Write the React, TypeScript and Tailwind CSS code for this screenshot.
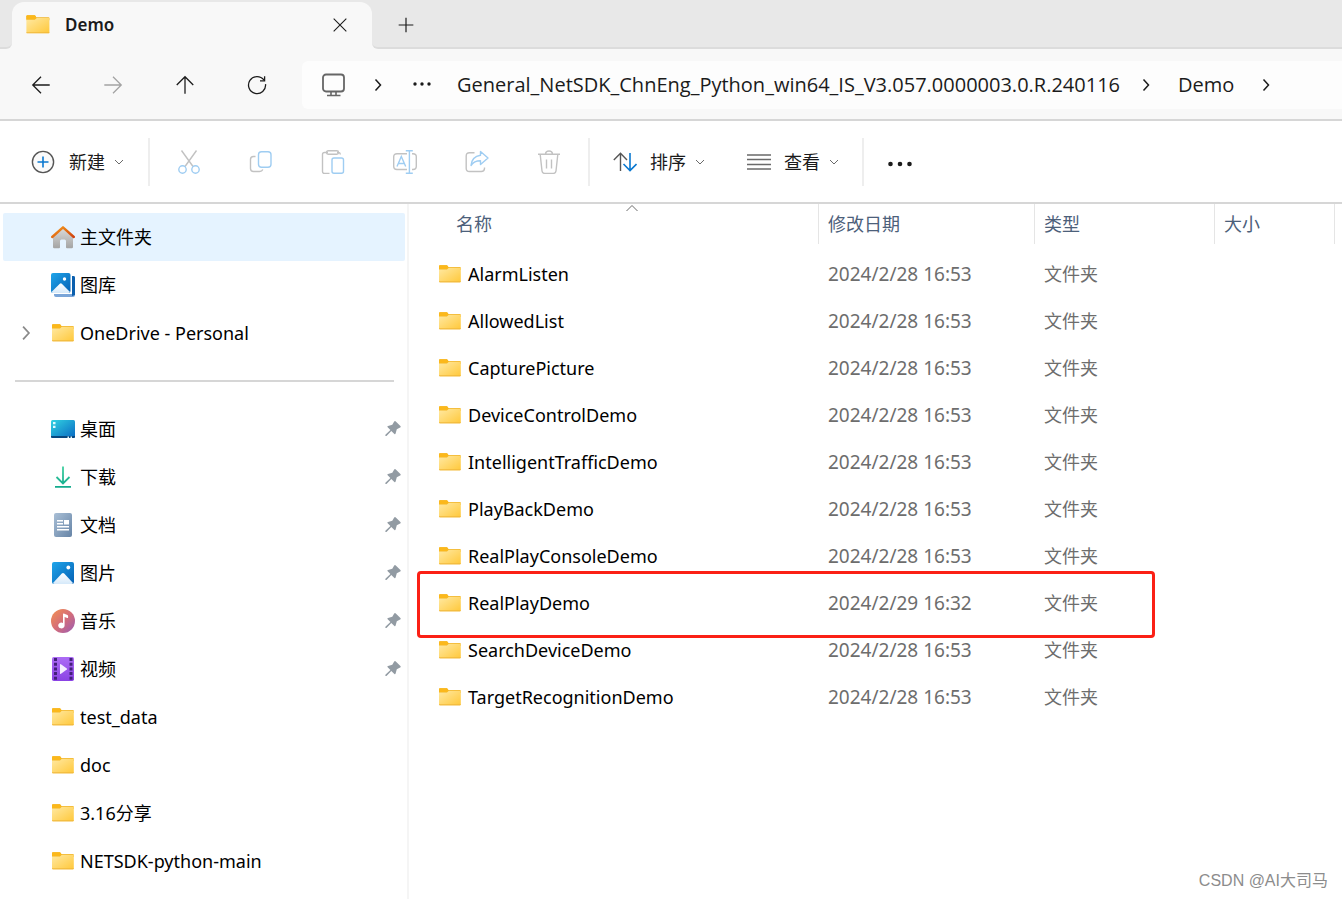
import type { ReactNode } from "react";

const files = [
  { name: "AlarmListen", date: "2024/2/28 16:53" },
  { name: "AllowedList", date: "2024/2/28 16:53" },
  { name: "CapturePicture", date: "2024/2/28 16:53" },
  { name: "DeviceControlDemo", date: "2024/2/28 16:53" },
  { name: "IntelligentTrafficDemo", date: "2024/2/28 16:53" },
  { name: "PlayBackDemo", date: "2024/2/28 16:53" },
  { name: "RealPlayConsoleDemo", date: "2024/2/28 16:53" },
  { name: "RealPlayDemo", date: "2024/2/29 16:32", marked: true },
  { name: "SearchDeviceDemo", date: "2024/2/28 16:53" },
  { name: "TargetRecognitionDemo", date: "2024/2/28 16:53" },
];

function Gradients() {
  return (
    <svg width="0" height="0" className="absolute" aria-hidden="true">
      <defs>
        <linearGradient id="folder" x1="0" y1="0" x2="1" y2="1">
          <stop offset="0" stopColor="#ffe9a3" />
          <stop offset="1" stopColor="#ffc83a" />
        </linearGradient>
        <linearGradient id="roof" x1="0" y1="0" x2="1" y2="1">
          <stop offset="0" stopColor="#f59b1c" />
          <stop offset="1" stopColor="#d0410f" />
        </linearGradient>
        <linearGradient id="wall" x1="0" y1="0" x2="0" y2="1">
          <stop offset="0" stopColor="#dedede" />
          <stop offset="1" stopColor="#a4a4a4" />
        </linearGradient>
        <linearGradient id="photo" x1="0" y1="0" x2="1" y2="1">
          <stop offset="0" stopColor="#1fa5ea" />
          <stop offset="1" stopColor="#0560b4" />
        </linearGradient>
        <linearGradient id="snow" x1="0" y1="0" x2="0" y2="1">
          <stop offset="0" stopColor="#ffffff" />
          <stop offset="1" stopColor="#d5e9fa" />
        </linearGradient>
        <linearGradient id="desktop" x1="0" y1="0" x2="1" y2="1">
          <stop offset="0" stopColor="#32d3e2" />
          <stop offset="1" stopColor="#0868c2" />
        </linearGradient>
        <linearGradient id="arrow" gradientUnits="userSpaceOnUse" x1="0" y1="1" x2="0" y2="23">
          <stop offset="0" stopColor="#42d0a0" />
          <stop offset="1" stopColor="#10a98c" />
        </linearGradient>
        <linearGradient id="paper" x1="0" y1="0" x2="1" y2="1">
          <stop offset="0" stopColor="#a9bfd6" />
          <stop offset="1" stopColor="#6684a6" />
        </linearGradient>
        <linearGradient id="disc" x1="0" y1="0" x2="1" y2="1">
          <stop offset="0" stopColor="#f49150" />
          <stop offset="0.5" stopColor="#d56e78" />
          <stop offset="1" stopColor="#9a5bb5" />
        </linearGradient>
        <linearGradient id="film" x1="0" y1="0" x2="0" y2="1">
          <stop offset="0" stopColor="#ac6cf5" />
          <stop offset="1" stopColor="#8a42e4" />
        </linearGradient>
      </defs>
    </svg>
  );
}

function Folder({ className = "w-[22px] h-[18px]" }: { className?: string }) {
  return (
    <svg viewBox="0 0 22 18" className={`shrink-0 ${className}`}>
      <path d="M0 1.2Q0 .2 1 .2h7l1.4 1.9H21q.8 0 .8.8V5H0z" fill="#f0b429" />
      <path d="M0 1.2Q0 .2 1 .2h6.6q.6 0 1 .6l.6 1v2.4H0z" fill="#fbb81b" />
      <path d="M0 4.4h8l1.8-1.6h12V16.4q0 .8-.8.8H.8q-.8 0-.8-.8z" fill="url(#folder)" />
      <path d="M0 16h21.8v.6q0 .8-.8.8H.8q-.8 0-.8-.8z" fill="#efb63b" opacity=".7" />
    </svg>
  );
}

function HomeIcon() {
  return (
    <svg viewBox="0 0 24 24" className="w-6 h-6">
      <path d="M2 10.5 12 2l10 8.500V22q0 1.200-1.200 1.200H16q-1 0-1-1V16q0-1.500-1.500-1.500h-3Q9 14.500 9 16v6.200q0 1-1 1H3.200Q2 23.200 2 22z" fill="url(#wall)" />
      <path d="M1.200 12 12 2.300 22.800 12" fill="none" stroke="url(#roof)" strokeWidth="2.400" strokeLinejoin="round" strokeLinecap="round" />
    </svg>
  );
}

function GalleryIcon() {
  return (
    <svg viewBox="0 0 24 24" className="w-6 h-6">
      <path d="M3 21h18V3h1.500Q24 3 24 4.500V22q0 2-2 2H5q-2 0-2-2z" fill="#7aa5d8" />
      <path d="M21 3h1.500Q24 3 24 4.500V22l-3 1z" fill="#0a5fae" />
      <rect width="20.500" height="21" rx="2" fill="#fff" />
      <rect width="19.500" height="20" rx="2" fill="url(#photo)" />
      <path d="m.5 19 8.300-8.300q1-1 2 0L19 19q-.6 1-1.600 1H2Q1 20 .5 19z" fill="url(#snow)" />
      <circle cx="13.500" cy="6" r="1.700" fill="#fff" />
    </svg>
  );
}

function DesktopIcon() {
  return (
    <svg viewBox="0 0 24 24" className="w-6 h-6">
      <rect y="3" width="24" height="18" rx="1.500" fill="url(#desktop)" />
      <path d="M0 19h24v.5q0 1.500-1.500 1.500h-21Q0 21 0 19.500z" fill="#07477f" />
      <path d="M2 5h2.500v2.300H2zM2 8.700h2.500V11H2zM16.500 19.400H18V21h-1.500zM19.500 19.400H21V21h-1.500z" fill="#dffaff" />
    </svg>
  );
}

function DownloadIcon() {
  return (
    <svg viewBox="0 0 24 24" className="w-6 h-6" fill="none" stroke="url(#arrow)" strokeWidth="1.800">
      <path d="M12 1.500 12.010 18.500M5.500 12l6.500 6.500 6.500-6.500M4 21.900l16 .01" />
    </svg>
  );
}

function DocumentIcon() {
  return (
    <svg viewBox="0 0 24 24" className="w-6 h-6">
      <rect x="3" width="18" height="24" rx="2" fill="url(#paper)" />
      <path d="M6 7h6v1.500H6zM6 10h6v1.500H6zM13 7h5v4.500h-5zM6 13h12v1.500H6zM6 16h12v1.500H6z" fill="#fff" />
    </svg>
  );
}

function PictureIcon() {
  return (
    <svg viewBox="0 0 24 24" className="w-6 h-6">
      <rect x="1" y="1" width="22" height="22" rx="2" fill="url(#photo)" />
      <path d="m2 22 8.800-9.500q1.200-1.100 2.400 0L22 22q-.5 1-1.500 1h-17Q2.500 23 2 22z" fill="url(#snow)" />
      <circle cx="17.300" cy="6.500" r="1.900" fill="#fff" />
    </svg>
  );
}

function MusicIcon() {
  return (
    <svg viewBox="0 0 24 24" className="w-6 h-6">
      <circle cx="12" cy="12" r="12" fill="url(#disc)" />
      <path d="M12 5.200q0-.8.800-.6l3.600 1.300q.7.300.7 1v1.600q0 .8-.8.500L13.600 8v8.500a3.200 2.900 0 1 1-1.600-2.500z" fill="#fff" />
    </svg>
  );
}

function VideoIcon() {
  return (
    <svg viewBox="0 0 24 24" className="w-6 h-6">
      <rect x="1" width="22" height="24" rx="1.800" fill="url(#film)" />
      <path
        d="M4.500 1v22M20 1v22"
        stroke="#43207a"
        strokeWidth="3"
        strokeDasharray="3 1.700"
      />
      <path d="M9 7.400v9.200q0 .7.600.3l6.200-4.400q.6-.5 0-1L9.600 7.100Q9 6.700 9 7.400z" fill="#f4ecff" />
    </svg>
  );
}

function PinIcon() {
  return (
    <svg viewBox="0 0 16 16" className="w-4 h-4 shrink-0" fill="#929ba3">
      <path d="M9.200.5q.8-.8 1.600 0l4.600 4.600q.8 1-.3 1.500l-3.300 1.600-1.200 4.400q-.4 1-1.200.3L6.300 9.900 1.500 15H.4v-1.200l5-4.800-2.700-2.800q-.8-.8.300-1.200l4.300-1.300z" />
    </svg>
  );
}

function Chevron({ className }: { className: string }) {
  return (
    <svg viewBox="0 0 12 12" className={`shrink-0 ${className}`} fill="none" stroke="currentColor" strokeWidth="1.500">
      <path d="m3.500.5 5 5.500-5 5.500" />
    </svg>
  );
}

function ChevronDown() {
  return (
    <svg viewBox="0 0 10 10" className="w-[10px] h-[10px] shrink-0" fill="none" stroke="#6a6a6a">
      <path d="m1 3 4 4 4-4" />
    </svg>
  );
}

function Line({ children, className = "w-6 h-6" }: { children: ReactNode; className?: string }) {
  return (
    <svg viewBox="0 0 24 24" className={`shrink-0 ${className}`} fill="none" stroke="currentColor" strokeWidth="1.400">
      {children}
    </svg>
  );
}

const quickAccess = [
  { label: "桌面", icon: <DesktopIcon />, pinned: true },
  { label: "下载", icon: <DownloadIcon />, pinned: true },
  { label: "文档", icon: <DocumentIcon />, pinned: true },
  { label: "图片", icon: <PictureIcon />, pinned: true },
  { label: "音乐", icon: <MusicIcon />, pinned: true },
  { label: "视频", icon: <VideoIcon />, pinned: true },
  { label: "test_data", icon: <Folder /> },
  { label: "doc", icon: <Folder /> },
  { label: "3.16分享", icon: <Folder /> },
  { label: "NETSDK-python-main", icon: <Folder /> },
];

const navButtons = [
  { label: "Back", tone: "text-[#1b1b1b]", path: "M21.500 12H3M12 3l-9 9 9 9" },
  { label: "Forward", tone: "text-[#a3a3a3]", path: "M2.500 12H21M12 3l9 9-9 9" },
  { label: "Up", tone: "text-[#1b1b1b]", path: "M12 21.500V3M3 12l9-9 9 9" },
  { label: "Refresh", tone: "text-[#1b1b1b]", path: "M19.500 6.500A9.300 9.300 0 1 0 21.300 11M20.300 2.500v5h-5" },
];

const actions = [
  {
    label: "Cut",
    icon: (
      <>
        <path d="m4.500.5 11.500 16M19.500.5 8 16.500" stroke="#c2c2c2" />
        <circle cx="5.500" cy="19.500" r="3.700" stroke="#9fcdf2" />
        <circle cx="18.500" cy="19.500" r="3.700" stroke="#9fcdf2" />
      </>
    ),
  },
  {
    label: "Copy",
    icon: (
      <>
        <path d="M6.500 6.500H4.500q-3 0-3 3v9q0 3 3 3h6q2.500 0 3.300-2" stroke="#c2c2c2" />
        <rect x="9.500" y="1.700" width="12.500" height="15.500" rx="3" stroke="#9fcdf2" />
      </>
    ),
  },
  {
    label: "Paste",
    icon: (
      <>
        <path d="M7 2.500H3.500q-2 0-2 2v17q0 2 2 2h5M16 2.500h1.500q1.700 0 1.900 2" stroke="#c2c2c2" />
        <rect x="5.500" y=".8" width="12" height="3.400" rx="1.700" stroke="#c2c2c2" />
        <rect x="11" y="8" width="11.500" height="15.300" rx="2" stroke="#9fcdf2" />
      </>
    ),
  },
  {
    label: "Rename",
    icon: (
      <>
        <path d="M14 3.700H4q-3.300 0-3.300 3v9.600q0 3.200 3.300 3.200h10M19 3.700h1q3.300 0 3.300 3v9.600q0 3.200-3.300 3.200h-1" stroke="#c2c2c2" />
        <path d="m4 16.500 4.300-10 4.400 10M5.500 13.500h5.800M12.800.8h7M16.400.8v22.400M12.800 23.200h7" stroke="#9fcdf2" />
      </>
    ),
  },
  {
    label: "Share",
    icon: (
      <>
        <path d="M9.500 2.700H4.500q-3.300 0-3.300 3.300v12.500q0 3 3.300 3h11.700q3.300 0 3.300-3v-1" stroke="#c2c2c2" />
        <path d="m15.500 1.500 7.500 6.500-7.500 6.500v-3.700q-6.500 0-9.500 4.700.8-9 9.500-10.300z" stroke="#9fcdf2" strokeLinejoin="round" />
      </>
    ),
  },
  {
    label: "Delete",
    icon: (
      <path d="M1 4.200h22M8.500 4q.2-3 3.500-3t3.500 3M3.200 4.500 5 21q.3 2.400 2.600 2.400h8.800q2.300 0 2.600-2.400l1.800-16.500M9.500 9.500v9M14.500 9.500v9" stroke="#c2c2c2" />
    ),
  },
];

function SideItem({ icon, label, pinned, active, expandable }: {
  icon: ReactNode;
  label: string;
  pinned?: boolean;
  active?: boolean;
  expandable?: boolean;
}) {
  return (
    <li>
      <a
        href="#"
        className={`flex h-12 items-center rounded-xs pr-1 ${active ? "bg-[#e5f3ff]" : ""}`}
      >
        <span className="w-12 pl-4 text-[#8a8a8a]">
          {expandable && <Chevron className="w-[14px] h-[14px]" />}
        </span>
        <span className="flex w-6 justify-center">{icon}</span>
        <span className="grow pl-[5px] text-lg text-black">{label}</span>
        {pinned && <PinIcon />}
      </a>
    </li>
  );
}

function TabStrip() {
  return (
    <header className="flex h-[49px] bg-[#f8f8f8]">
      <div className="w-3 rounded-br-md border-b-2 border-[#dcdcdc] bg-[#e8e8e8]" />
      <div className="flex w-[360px] bg-[#e8e8e8] pt-[2px]">
        <div className="flex grow items-center rounded-t-xl bg-[#f8f8f8] pr-[22px] pb-[2px] pl-[14px]">
          <Folder className="w-6 h-[19px]" />
          <span className="grow pl-[15px] text-[17px] font-semibold text-[#1b1b1b]">Demo</span>
          <button aria-label="Close tab" className="flex w-5 h-5 items-center justify-center text-[#1b1b1b]">
            <Line className="w-4 h-4">
              <path d="m2.500 2.500 19 19M21.500 2.500l-19 19" strokeWidth="1.600" />
            </Line>
          </button>
        </div>
      </div>
      <div className="flex grow items-center rounded-bl-md border-b-2 border-[#dcdcdc] bg-[#e8e8e8] pt-[3px] pl-[26px]">
        <button aria-label="New tab" className="text-[#1b1b1b]">
          <Line className="w-4 h-4">
            <path d="M12 1v22M1 12h22" strokeWidth="1.800" />
          </Line>
        </button>
      </div>
    </header>
  );
}

function AddressBar() {
  return (
    <nav className="flex h-[72px] items-center border-b-2 border-[#d6d6d6] bg-[#f8f8f8] pt-[2px] pl-[17px]">
      <div className="flex gap-6">
        {navButtons.map((b) => (
          <button key={b.label} aria-label={b.label} className={`flex w-12 h-12 items-center justify-center ${b.tone}`}>
            <Line className="w-[22px] h-[22px]">
              <path d={b.path} />
            </Line>
          </button>
        ))}
      </div>
      <div className="ml-[21px] flex h-12 grow items-center rounded-l-md bg-[#fdfdfd] pl-5 font-['Open_Sans','Noto_Sans_CJK_SC',sans-serif] text-xl whitespace-nowrap text-[#1b1b1b]">
        <Line className="w-6 h-6 text-[#666666]">
          <rect x="1" y="1.500" width="21" height="17" rx="3" strokeWidth="1.800" />
          <path d="M9 18.500V22M14 18.500V22M5 22.500h13.500" strokeWidth="1.600" />
        </Line>
        <Chevron className="ml-[26px] w-3 h-3" />
        <button aria-label="More folders" className="ml-[29px]">
          <svg viewBox="0 0 18 18" className="w-[18px] h-[18px]" fill="#1b1b1b">
            <circle cx="2" cy="8" r="1.700" />
            <circle cx="9" cy="8" r="1.700" />
            <circle cx="16" cy="8" r="1.700" />
          </svg>
        </button>
        <a href="#" className="ml-[26px]">General_NetSDK_ChnEng_Python_win64_IS_V3.057.0000003.0.R.240116</a>
        <Chevron className="ml-5 w-3 h-3" />
        <a href="#" className="ml-[26px]">Demo</a>
        <Chevron className="ml-[26px] w-3 h-3" />
      </div>
    </nav>
  );
}

function Divider() {
  return <div className="h-12 w-[2px] shrink-0 bg-[#eeeeee]" />;
}

function Toolbar() {
  return (
    <div className="flex h-[83px] items-center border-b-2 border-[#d6d6d6] bg-white text-lg whitespace-nowrap text-[#1b1b1b]">
      <button className="flex items-center pr-6 pl-[31px]">
        <Line>
          <circle cx="12" cy="12" r="10.600" stroke="#555555" fill="#fafafa" />
          <path d="M12 6.500v11M6.500 12h11" stroke="#0a78d0" strokeWidth="1.600" />
        </Line>
        <span className="pr-[9px] pl-[14px]">新建</span>
        <ChevronDown />
      </button>
      <Divider />
      <div className="flex gap-6 px-[15px]">
        {actions.map((a) => (
          <button key={a.label} aria-label={a.label} disabled className="flex w-12 h-12 items-center justify-center">
            <Line>{a.icon}</Line>
          </button>
        ))}
      </div>
      <Divider />
      <button className="flex items-center pr-[42px] pl-[23px]">
        <Line>
          <path d="M7.500 21V3.500M.8 10l6.700-6.700L14 10" stroke="#555555" />
          <path d="M17 3v17.500M10.500 14l6.500 6.500 6.500-6.500" stroke="#0a78d0" strokeWidth="1.600" />
        </Line>
        <span className="pr-[9px] pl-[13px]">排序</span>
        <ChevronDown />
      </button>
      <button className="flex items-center pr-[23px]">
        <Line className="w-6 h-6 text-[#6a6a6a]">
          <path d="M0 5h24M0 9.500h24M0 14.500h24M0 19h24" />
        </Line>
        <span className="pr-[9px] pl-[13px]">查看</span>
        <ChevronDown />
      </button>
      <Divider />
      <button aria-label="See more" className="pl-6">
        <svg viewBox="0 0 24 24" className="w-6 h-6" fill="#1b1b1b">
          <circle cx="2.500" cy="14" r="2.300" />
          <circle cx="12" cy="14" r="2.300" />
          <circle cx="21.500" cy="14" r="2.300" />
        </svg>
      </button>
    </div>
  );
}

function Sidebar() {
  return (
    <aside className="w-[409px] shrink-0 border-r-2 border-[#f5f5f5] pt-[9px] pr-[2px] pl-[3px]">
      <ul>
        <SideItem icon={<HomeIcon />} label="主文件夹" active />
        <SideItem icon={<GalleryIcon />} label="图库" />
        <SideItem icon={<Folder />} label="OneDrive - Personal" expandable />
      </ul>
      <div className="flex h-12 items-center pr-[11px] pl-3">
        <hr className="grow border-t-2 border-[#d6d6d6]" />
      </div>
      <ul>
        {quickAccess.map((q) => (
          <SideItem key={q.label} {...q} />
        ))}
      </ul>
    </aside>
  );
}

function HeadCell({ children, className = "" }: { children: ReactNode; className?: string }) {
  return (
    <th scope="col" className="h-[46px] p-0 align-top font-normal">
      <div className={`flex h-10 items-center border-r border-[#e5e5e5] text-lg text-[#4c607a] ${className}`}>
        {children}
      </div>
    </th>
  );
}

function FileTable() {
  return (
    <main className="relative min-w-0 grow">
      <table className="w-full table-fixed text-left">
        <colgroup>
          <col className="w-[410px]" />
          <col className="w-[216px]" />
          <col className="w-[180px]" />
          <col className="w-[120px]" />
          <col />
        </colgroup>
        <thead>
          <tr>
            <HeadCell className="relative pl-[47px]">
              名称
              <svg viewBox="0 0 12 8" className="absolute top-0 left-[217px] w-3 h-2" fill="none" stroke="#6a6a6a">
                <path d="m.5 7 5.500-5.500L11.500 7" />
              </svg>
            </HeadCell>
            <HeadCell className="pl-[9px]">修改日期</HeadCell>
            <HeadCell className="pl-[9px]">类型</HeadCell>
            <HeadCell className="pl-[9px]">大小</HeadCell>
            <td />
          </tr>
        </thead>
        <tbody>
          {files.map((f) => (
            <tr key={f.name} className="h-[47px] text-[#6d6d6d]">
              <td className="relative p-0 pl-[30px]">
                <a href="#" className="flex items-center gap-[7px] text-lg text-black">
                  <Folder />
                  {f.name}
                </a>
                {f.marked && (
                  <div className="pointer-events-none absolute -top-2 left-2 h-[67px] w-[738px] rounded-sm border-3 border-[#fb2015]" />
                )}
              </td>
              <td className="p-0 pl-[9px] text-[19px] leading-7">{f.date}</td>
              <td className="p-0 pl-[9px] text-lg">文件夹</td>
              <td />
              <td />
            </tr>
          ))}
        </tbody>
      </table>
      <div className="absolute right-[14px] bottom-[6px] font-['Liberation_Sans','Noto_Sans_CJK_SC',sans-serif] text-base text-[#8c8c8c]">
        CSDN @AI大司马
      </div>
    </main>
  );
}

export default function App() {
  return (
    <div className="flex min-h-screen flex-col bg-white font-['Noto_Sans','Noto_Sans_CJK_SC',sans-serif]">
      <Gradients />
      <TabStrip />
      <AddressBar />
      <Toolbar />
      <div className="flex grow">
        <Sidebar />
        <FileTable />
      </div>
    </div>
  );
}
